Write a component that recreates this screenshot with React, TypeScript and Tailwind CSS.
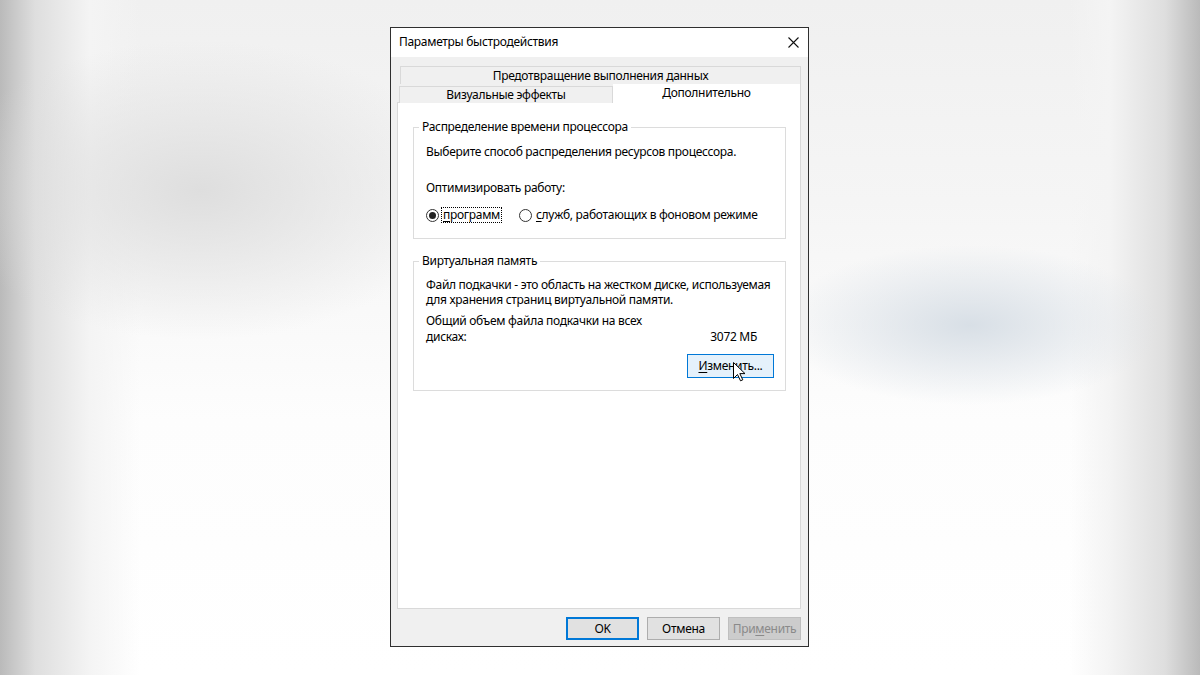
import React from 'react';

const font = { fontFamily: '"Noto Sans", "Open Sans", sans-serif' };

function Radio({ checked }: { checked?: boolean }) {
  return (
    <span className="w-[13px] h-[13px] rounded-full border border-[#333] bg-white flex items-center justify-center shrink-0">
      {checked && <span className="w-[7px] h-[7px] rounded-full bg-[#222]" />}
    </span>
  );
}

function Cursor() {
  return (
    <svg width="13" height="20" viewBox="0 0 13 20" className="absolute left-[46px] top-[8px]">
      <path
        d="M0.5 0.5 L0.5 16.5 L4.5 12.5 L7.5 18.8 L9.8 17.8 L6.8 11.6 L12 11.6 Z"
        fill="#fff"
        stroke="#000"
        strokeWidth="1"
        strokeLinejoin="miter"
      />
    </svg>
  );
}

function GroupBox({ title, className, children }: { title: string; className?: string; children: React.ReactNode }) {
  return (
    <fieldset className={`border border-[#dcdcdc] ${className ?? ''}`}>
      <legend className="ml-[-7px] px-[3px] leading-[16px]">{title}</legend>
      {children}
    </fieldset>
  );
}

export default function App() {
  return (
    <div
      className="w-[1200px] h-[675px] flex items-center justify-center bg-[image:radial-gradient(ellipse_260px_150px_at_200px_190px,#dedede,transparent),radial-gradient(ellipse_190px_80px_at_970px_325px,#d8dfe6,transparent),linear-gradient(to_right,#bababa_0px,#dedede_35px,#f4f4f4_90px,transparent_140px,transparent_1070px,#f4f4f4_1110px,#dedede_1165px,#bababa_1200px),linear-gradient(to_bottom,#f0f0f0_0px,#f5f5f5_200px,#fdfdfd_420px,#ffffff_675px)]"
      style={font}
    >
      <div className="w-[419px] h-[620px] mr-[1px] mb-[1px] border border-[#2f2f2f] bg-[#f0f0f0] flex flex-col text-[12px] tracking-[-0.3px] text-black">
        {/* title bar */}
        <div className="h-[29px] bg-white flex items-center justify-between pl-[8px] pr-[9px] shrink-0">
          <span className="leading-[16px] mt-[-1px]">Параметры быстродействия</span>
          <svg width="11" height="11" viewBox="0 0 11 11" className="mt-[-1px]">
            <path d="M0.5 0.5 L10.5 10.5 M10.5 0.5 L0.5 10.5" stroke="#111" strokeWidth="1.1" />
          </svg>
        </div>

        {/* body */}
        <div className="flex-1 flex flex-col pt-[9px] pl-[6px] pr-[7px] pb-[6px]">
          {/* tab rows */}
          <div className="ml-[3px] h-[18px] border border-b-0 border-[#d9d9d9] bg-[#f0f0f0] flex items-center justify-center leading-[16px] pt-[1px]">
            Предотвращение выполнения данных
          </div>
          <div className="h-[19px] flex ml-[2px] relative z-10 -mb-px">
            <div className="w-[214px] mt-[2px] border border-b-0 border-[#d9d9d9] bg-[#f0f0f0] flex items-center justify-center leading-[16px]">
              Визуальные эффекты
            </div>
            <div className="flex-1 bg-white border-r border-[#d9d9d9] flex items-start justify-center pt-[1px] leading-[16px]">
              Дополнительно
            </div>
          </div>

          {/* panel */}
          <div className="flex-1 bg-white border border-[#d9d9d9] px-[15px] pr-[14px] pt-[16px]">
            <GroupBox title="Распределение времени процессора" className="pl-[12px] pt-[9px] pb-[15px]">
              <div className="leading-[15px]">Выберите способ распределения ресурсов процессора.</div>
              <div className="leading-[15px] mt-[21px]">Оптимизировать работу:</div>
              <div className="flex items-center mt-[12px] h-[16px]">
                <Radio checked />
                <span className="ml-[2px] border border-dotted border-black px-[1px] leading-[14px]">
                  <u className="underline-offset-2">п</u>рограмм
                </span>
                <span className="ml-[17px]">
                  <Radio />
                </span>
                <span className="ml-[4px] leading-[14px]">
                  <u className="underline-offset-2">с</u>лужб, работающих в фоновом режиме
                </span>
              </div>
            </GroupBox>

            <GroupBox title="Виртуальная память" className="mt-[14px] pl-[12px] pr-[11px] pt-[8px] pb-[12px]">
              <div className="leading-[15px]">
                Файл подкачки - это область на жестком диске, используемая для хранения страниц виртуальной памяти.
              </div>
              <div className="flex items-end justify-between mt-[6px] pr-[17px]">
                <div className="w-[225px] leading-[16px]">Общий объем файла подкачки на всех дисках:</div>
                <div className="leading-[16px]">3072 МБ</div>
              </div>
              <div className="flex justify-end mt-[9px]">
                <div className="relative">
                  <button className="w-[87px] h-[24px] border border-[#0078d7] bg-[#e5f1fb] leading-[16px] pb-[1px] tracking-[-0.3px]">
                    <u className="underline-offset-2">И</u>зменить...
                  </button>
                  <Cursor />
                </div>
              </div>
            </GroupBox>
          </div>

          {/* buttons */}
          <div className="flex justify-end gap-[8px] mt-[8px] h-[23px]">
            <button className="w-[73px] h-[23px] border-2 border-[#0078d7] bg-[#e1e1e1] leading-[16px] tracking-[-0.3px]">OK</button>
            <button className="w-[73px] h-[23px] border border-[#adadad] bg-[#e1e1e1] leading-[16px] tracking-[-0.3px]">Отмена</button>
            <button className="w-[73px] h-[23px] border border-[#bfbfbf] bg-[#cccccc] text-[#8a8a8a] leading-[16px] tracking-[-0.3px]">
              При<u className="underline-offset-2">м</u>енить
            </button>
          </div>
        </div>
      </div>
    </div>
  );
}
